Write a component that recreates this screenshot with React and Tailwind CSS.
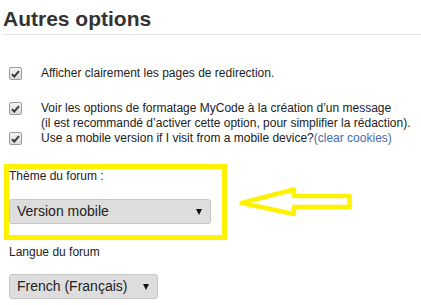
import React from "react";

function Check() {
  return (
    <span className="flex h-[13px] w-[13px] shrink-0 items-center justify-center rounded-[2px] border border-[#9c9c9c] bg-gradient-to-b from-[#f4f4f4] to-[#dcdcdc]">
      <svg width="9" height="8" viewBox="0 0 9 8">
        <path d="M1 4.2 L3.3 6.5 L8 1.2" fill="none" stroke="#3a3a3a" strokeWidth="2" />
      </svg>
    </span>
  );
}

function Select({ value, width }) {
  return (
    <div
      className={`flex h-[25px] items-center justify-between rounded-[3px] border border-[#c8c8c8] bg-[#dddddd] pl-[7px] pr-[8px] text-[14px] text-[#222] ${width}`}
    >
      <span>{value}</span>
      <svg width="6" height="6" viewBox="0 0 6 6">
        <polygon points="0,0 6,0 3,6" fill="#111" />
      </svg>
    </div>
  );
}

export default function App() {
  return (
    <div className="h-[305px] w-[421px] overflow-hidden bg-white font-['Liberation_Sans',Arial,sans-serif] text-[12px] leading-[15px] text-[#222]">
      {/* Titre */}
      <div className="ml-[2px] border-b border-[#e2e2e2] pt-[7px] pb-[3px]">
        <h2 className="pl-[1px] text-[21px] font-bold leading-[24px] text-[#333]">
          Autres options
        </h2>
      </div>

      {/* Cases à cocher */}
      <div className="mt-[31px] flex items-start pl-[9px]">
        <span className="mt-[1px]">
          <Check />
        </span>
        <span className="ml-[19px] whitespace-nowrap">
          Afficher clairement les pages de redirection.
        </span>
      </div>
      <div className="mt-[20px] flex items-start pl-[9px]">
        <span className="mt-[1px]">
          <Check />
        </span>
        <span className="ml-[19px] whitespace-nowrap">
          Voir les options de formatage MyCode à la création d’un message
          <br />
          (il est recommandé d’activer cette option, pour simplifier la rédaction).
        </span>
      </div>
      <div className="flex items-start pl-[9px]">
        <span className="mt-[1px]">
          <Check />
        </span>
        <span className="ml-[19px] whitespace-nowrap">
          Use a mobile version if I visit from a mobile device?
          <span className="text-[#3d6db4]">(clear cookies)</span>
        </span>
      </div>

      {/* Thème du forum */}
      <div className="mt-[18px] flex items-start">
        <div className="ml-[4px] h-[76px] w-[223px] border-[5px] border-[#fff200]">
          <div>Thème du forum :</div>
          <div className="mt-[15px]">
            <Select value="Version mobile" width="w-[202px]" />
          </div>
        </div>
        <svg className="ml-[9px] mt-[21px]" width="120" height="36" viewBox="0 0 120 36">
          <polygon
            points="5.5,18 58,4.5 58,11 113.5,11 113.5,22 58,22 58,29"
            fill="none"
            stroke="#fff200"
            strokeWidth="4.5"
            strokeLinejoin="round"
          />
        </svg>
      </div>

      {/* Langue */}
      <div className="mt-[5px] pl-[9px]">
        <div>Langue du forum</div>
        <div className="mt-[14px]">
          <Select value="French (Français)" width="w-[149px]" />
        </div>
      </div>
    </div>
  );
}
